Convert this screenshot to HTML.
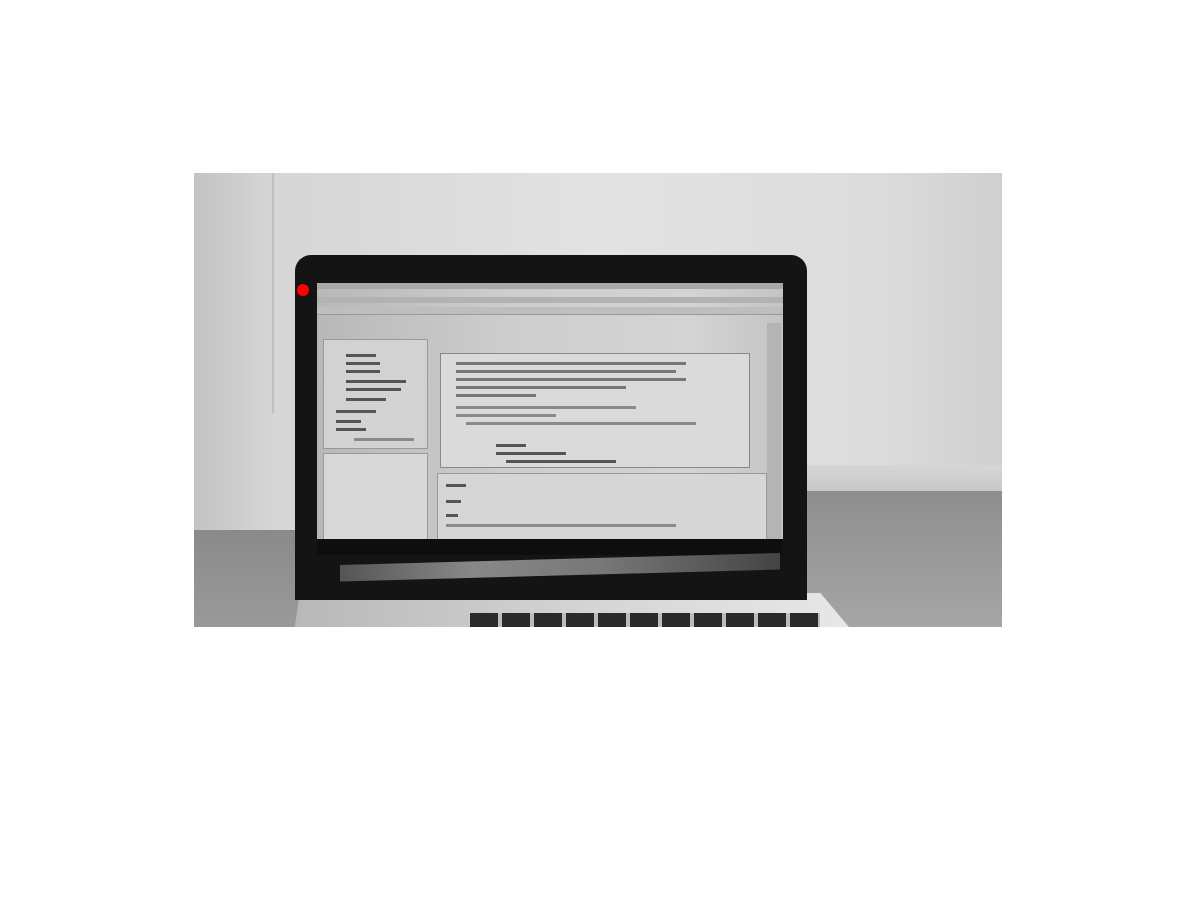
<!DOCTYPE html>
<html><head><style>
html,body{margin:0;padding:0;background:#fff;width:1200px;height:901px;overflow:hidden;position:relative}
div{position:absolute;box-sizing:border-box}
.l{height:3px;background:#8a8a8a}
.d{height:3px;background:#555}
</style></head><body>
<div style="left:194px;top:173px;width:808px;height:454px;overflow:hidden;background:linear-gradient(90deg,#c4c4c4 0%,#d6d6d6 10%,#e2e2e2 50%,#dcdcdc 85%,#cfcfcf 100%)">
  <div style="left:78px;top:0;width:2px;height:240px;background:#c0c0c0"></div>
  <div style="left:0;top:357px;width:120px;height:100px;background:linear-gradient(180deg,#8a8a8a,#9a9a9a)"></div>
  <div style="left:610px;top:317px;width:200px;height:140px;background:linear-gradient(180deg,#8e8e8e,#a6a6a6)"></div>
  <div style="left:610px;top:292px;width:200px;height:26px;background:linear-gradient(180deg,#d6d6d6,#c8c8c8)"></div>
  <!-- base -->
  <div style="left:100px;top:420px;width:560px;height:40px;background:linear-gradient(90deg,#b8b8b8,#d8d8d8 60%,#e8e8e8);clip-path:polygon(1% 0,94% 0,100% 100%,0 100%)"></div>
  <div style="left:276px;top:440px;width:350px;height:20px;background:repeating-linear-gradient(90deg,#2a2a2a 0 28px,#bdbdbd 28px 32px)"></div>
  <!-- lid -->
  <div style="left:101px;top:82px;width:512px;height:345px;background:#141414;border-radius:16px 16px 0 0"></div>
  <!-- screen -->
  <div style="left:123px;top:110px;width:466px;height:262px;background:linear-gradient(90deg,#b8b8b8,#cdcdcd 40%,#d4d4d4 80%,#c4c4c4)">
    <div style="left:0;top:0;width:100%;height:6px;background:#a8a8a8"></div>
    <div style="left:0;top:14px;width:100%;height:6px;background:#b2b2b2"></div>
    <div style="left:0;top:24px;width:100%;height:8px;background:#bebebe;border-bottom:1px solid #999"></div>
    <div style="left:6px;top:56px;width:105px;height:110px;background:#d2d2d2;border:1px solid #999">
      <div class="d" style="left:22px;top:14px;width:30px"></div>
      <div class="d" style="left:22px;top:22px;width:34px"></div>
      <div class="d" style="left:22px;top:30px;width:34px"></div>
      <div class="d" style="left:22px;top:40px;width:60px"></div>
      <div class="d" style="left:22px;top:48px;width:55px"></div>
      <div class="d" style="left:22px;top:58px;width:40px"></div>
      <div class="d" style="left:12px;top:70px;width:40px"></div>
      <div class="d" style="left:12px;top:80px;width:25px"></div>
      <div class="d" style="left:12px;top:88px;width:30px"></div>
      <div class="l" style="left:30px;top:98px;width:60px"></div>
    </div>
    <div style="left:6px;top:170px;width:105px;height:100px;background:#d8d8d8;border:1px solid #999"></div>
    <div style="left:123px;top:70px;width:310px;height:115px;background:#dadada;border:1px solid #888">
      <div class="d" style="left:15px;top:8px;width:230px;background:#777"></div>
      <div class="d" style="left:15px;top:16px;width:220px;background:#777"></div>
      <div class="d" style="left:15px;top:24px;width:230px;background:#777"></div>
      <div class="d" style="left:15px;top:32px;width:170px;background:#777"></div>
      <div class="d" style="left:15px;top:40px;width:80px;background:#777"></div>
      <div class="l" style="left:15px;top:52px;width:180px"></div>
      <div class="l" style="left:15px;top:60px;width:100px"></div>
      <div class="l" style="left:25px;top:68px;width:230px"></div>
      <div class="d" style="left:55px;top:90px;width:30px"></div>
      <div class="d" style="left:55px;top:98px;width:70px"></div>
      <div class="d" style="left:65px;top:106px;width:110px"></div>
    </div>
    <div style="left:120px;top:190px;width:330px;height:68px;background:#d6d6d6;border:1px solid #999">
      <div class="d" style="left:8px;top:10px;width:20px"></div>
      <div class="d" style="left:8px;top:26px;width:15px"></div>
      <div class="d" style="left:8px;top:40px;width:12px"></div>
      <div class="l" style="left:8px;top:50px;width:230px"></div>
    </div>
    <div style="left:450px;top:40px;width:14px;height:220px;background:#b4b4b4"></div>
  </div>
  <div style="left:123px;top:366px;width:466px;height:16px;background:#0e0e0e"></div>
  <div style="left:146px;top:380px;width:440px;height:30px;background:linear-gradient(90deg,#555,#888 30%,#777 60%,#444);clip-path:polygon(0 40%,100% 0,100% 55%,0 95%)"></div>
  <div style="left:103px;top:111px;width:12px;height:12px;border-radius:50%;background:#f00"></div>
</div>
</body></html>
